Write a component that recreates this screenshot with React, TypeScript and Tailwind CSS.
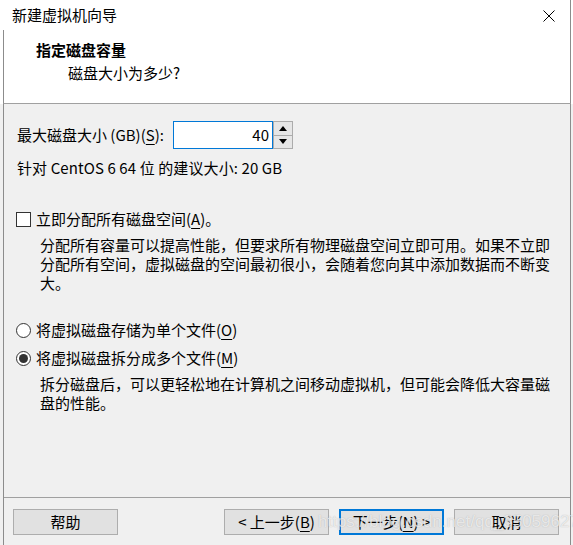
import React from 'react';

function Mn({ children }: { children: React.ReactNode }) {
  return <span className="underline underline-offset-[3px] decoration-1">{children}</span>;
}

function Btn({ children, primary }: { children: React.ReactNode; primary?: boolean }) {
  return (
    <button
      className={`w-[105px] h-[26px] flex items-center justify-center bg-[#e1e1e1] text-[15px] leading-[20px] ${
        primary ? 'border-2 border-[#0078d7]' : 'border border-[#adadad]'
      }`}
    >
      {children}
    </button>
  );
}

export default function App() {
  const [allocate, setAllocate] = React.useState(false);
  const [mode, setMode] = React.useState<'single' | 'multi'>('multi');
  const [size, setSize] = React.useState(40);

  return (
    <div className="relative w-[573px] h-[545px] flex flex-col bg-[#f0f0f0] text-black text-[15px] font-['Noto_Sans_CJK_SC','Microsoft_YaHei',sans-serif] overflow-hidden">
      {/* Title bar */}
      <div className="h-[30px] bg-white flex">
        <div className="w-[571px] border-r border-[#8c8c8c] flex items-center justify-between pl-[12px] pr-[15px]">
          <span className="leading-[20px]">新建虚拟机向导</span>
          <svg width="12" height="12" viewBox="0 0 12 12" className="mt-[1px]">
            <path d="M0.5 0.5 L11.5 11.5 M11.5 0.5 L0.5 11.5" stroke="#000" strokeWidth="1" />
          </svg>
        </div>
      </div>

      {/* Header */}
      <div className="bg-white pl-[3px] flex">
        <div className="w-[568px] h-[74px] border-l border-r border-b border-l-[#8c8c8c] border-r-[#8c8c8c] border-b-[#a0a0a0] pt-[10px]">
          <div className="pl-[32px] font-bold leading-[20px]">指定磁盘容量</div>
          <div className="pl-[64px] mt-[3px] leading-[20px]">磁盘大小为多少?</div>
        </div>
      </div>

      {/* Body */}
      <div className="flex-1 pl-[3px] flex">
        <div className="w-[568px] border-l border-r border-[#8c8c8c] flex flex-col">
          <div className="flex-1 flex flex-col">
            <div className="mt-[17px] pl-[13px] flex items-center">
              <span className="leading-[20px] w-[156px]">
                最大磁盘大小 (GB)(<Mn>S</Mn>):
              </span>
              <div className="w-[100px] h-[28px] bg-white border border-[#0078d7] flex items-center justify-end pr-[3px] leading-[20px]">
                {size}
              </div>
              <div className="w-[20px] h-[28px] border border-[#acacac] flex flex-col bg-[#f0f0f0]">
                <button
                  onClick={() => setSize(size + 1)}
                  className="flex-1 flex items-center justify-center bg-[#e6e6e6] border-b border-[#acacac]"
                >
                  <svg width="8" height="5" viewBox="0 0 8 5">
                    <path d="M4 0 L8 5 L0 5 Z" fill="#000" />
                  </svg>
                </button>
                <button
                  onClick={() => setSize(Math.max(1, size - 1))}
                  className="flex-1 flex items-center justify-center bg-[#e6e6e6]"
                >
                  <svg width="8" height="5" viewBox="0 0 8 5">
                    <path d="M0 0 L8 0 L4 5 Z" fill="#000" />
                  </svg>
                </button>
              </div>
            </div>

            <div className="mt-[9px] pl-[13px] leading-[20px] tracking-[0.1px]">针对 CentOS 6 64 位 的建议大小: 20 GB</div>

            <label className="mt-[31px] pl-[12px] flex items-center gap-[5px] leading-[20px]">
              <span
                onClick={() => setAllocate(!allocate)}
                className="w-[15px] h-[15px] bg-white border border-[#333] flex items-center justify-center"
              >
                {allocate && (
                  <svg width="10" height="10" viewBox="0 0 10 10">
                    <path d="M1 5 L4 8 L9 2" stroke="#000" strokeWidth="1.5" fill="none" />
                  </svg>
                )}
              </span>
              <span>
                立即分配所有磁盘空间(<Mn>A</Mn>)。
              </span>
            </label>
            <p className="mt-[6px] ml-[36px] w-[516px] leading-[19px]">
              分配所有容量可以提高性能，但要求所有物理磁盘空间立即可用。如果不立即分配所有空间，虚拟磁盘的空间最初很小，会随着您向其中添加数据而不断变大。
            </p>

            <label
              onClick={() => setMode('single')}
              className="mt-[28px] pl-[12px] flex items-center gap-[5px] leading-[20px]"
            >
              <span className="w-[15px] h-[15px] rounded-full bg-white border border-[#333] flex items-center justify-center">
                {mode === 'single' && <span className="w-[9px] h-[9px] rounded-full bg-[#333]" />}
              </span>
              <span>
                将虚拟磁盘存储为单个文件(<Mn>O</Mn>)
              </span>
            </label>
            <label
              onClick={() => setMode('multi')}
              className="mt-[8px] pl-[12px] flex items-center gap-[5px] leading-[20px]"
            >
              <span className="w-[15px] h-[15px] rounded-full bg-white border border-[#333] flex items-center justify-center">
                {mode === 'multi' && <span className="w-[9px] h-[9px] rounded-full bg-[#333]" />}
              </span>
              <span>
                将虚拟磁盘拆分成多个文件(<Mn>M</Mn>)
              </span>
            </label>
            <p className="mt-[6px] ml-[36px] w-[516px] leading-[19px]">
              拆分磁盘后，可以更轻松地在计算机之间移动虚拟机，但可能会降低大容量磁盘的性能。
            </p>
          </div>

          {/* Footer */}
          <div className="h-[48px] border-t border-[#a0a0a0] pt-[11px] pl-[9px] pr-[11px] flex items-start justify-between">
            <Btn>帮助</Btn>
            <div className="flex gap-[10px]">
              <Btn>
                &lt; 上一步(<Mn>B</Mn>)
              </Btn>
              <Btn primary>
                下一步(<Mn>N</Mn>) &gt;
              </Btn>
              <Btn>取消</Btn>
            </div>
          </div>
        </div>
      </div>

      {/* Watermark */}
      <div className="absolute left-[318px] top-[511px] text-[17px] leading-[22px] font-['Liberation_Sans',sans-serif] text-white/70 [text-shadow:0_0_1px_rgba(120,120,120,0.5)] pointer-events-none whitespace-nowrap">
        https://blog.csdn.net/qq_35059627
      </div>
    </div>
  );
}
